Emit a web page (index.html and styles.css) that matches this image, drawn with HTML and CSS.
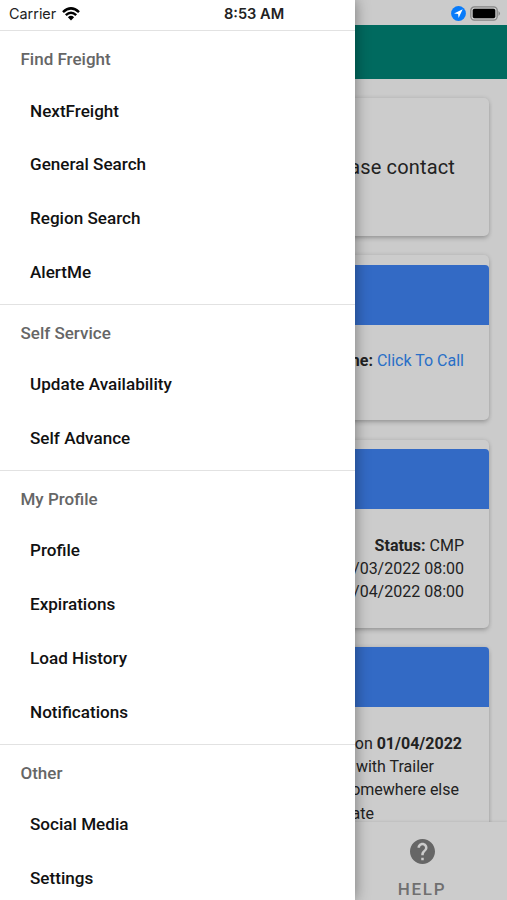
FILE: index.html
```
<!DOCTYPE html>
<html lang="en">
<head>
<meta charset="utf-8">
<title>Freight</title>
<link rel="stylesheet" href="styles.css">
</head>
<body>
<div class="phone">
  <div class="page">
    <div class="status-space"></div>
    <header class="toolbar"></header>
    <main class="content">
      <section class="card notice">Please contact</section>
      <section class="card call">
        <div class="card-head"></div>
        <div class="card-body"><div><b>Phone:</b> <a class="link">Click To Call</a></div></div>
      </section>
      <section class="card load">
        <div class="card-head"></div>
        <div class="card-body"><div><b>Status:</b> CMP</div><div>01/03/2022 08:00</div><div>01/04/2022 08:00</div></div>
      </section>
      <section class="card news">
        <div class="card-head"></div>
        <div class="card-body">
          <div class="line-a">on <b>01/04/2022</b></div>
          <div class="line-b">with Trailer</div>
          <div class="line-c">somewhere else</div>
          <div class="line-d">date</div>
        </div>
      </section>
    </main>
    <footer class="tabs">
      <div class="tab">
        <svg class="help-icon" viewBox="2 2 20 20"><path fill="#666" d="M12 2C6.48 2 2 6.48 2 12s4.48 10 10 10 10-4.48 10-10S17.520 2 12 2zm1 17h-2v-2h2v2zm2.070-7.750l-.9.920C13.450 12.900 13 13.500 13 15h-2v-.5c0-1.100.45-2.100 1.170-2.830l1.240-1.260c.370-.360.590-.860.590-1.410 0-1.100-.9-2-2-2s-2 .9-2 2H8c0-2.210 1.790-4 4-4s4 1.790 4 4c0 .880-.360 1.680-.930 2.250z"/></svg>
        <span>HELP</span>
      </div>
    </footer>
  </div>
  <aside class="drawer">
    <nav>
      <section class="group"><h2>Find Freight</h2><a>NextFreight</a><a>General Search</a><a>Region Search</a><a>AlertMe</a></section>
      <section class="group"><h2>Self Service</h2><a>Update Availability</a><a>Self Advance</a></section>
      <section class="group"><h2>My Profile</h2><a>Profile</a><a>Expirations</a><a>Load History</a><a>Notifications</a></section>
      <section class="group"><h2>Other</h2><a>Social Media</a><a>Settings</a></section>
    </nav>
  </aside>
  <div class="status">
    <span class="carrier">Carrier
      <svg width="18" height="14" viewBox="0 0 18 14" fill="none" stroke="#000" stroke-width="2.500"><path d="M1 5.100Q9-2.400 17 5.100M3.800 8.100Q9 3.300 14.200 8.100"/><path d="M5.900 10.200Q9 7.500 12.100 10.200L9 13.500Z" fill="#000" stroke="none"/></svg>
    </span>
    <span class="clock">8:53 AM</span>
    <span class="right">
      <svg width="15" height="15" viewBox="0 0 15 15"><circle cx="7.500" cy="7.500" r="7.400" fill="#087bfa"/><path d="M11.700 3.300L3 7.500l4.100.4.500 4.100z" fill="#fff"/></svg>
      <svg width="31" height="15" viewBox="0 0 31 15"><rect x=".8" y=".9" width="26.400" height="13.200" rx="3.500" fill="none" stroke="#858585" stroke-width="1.300"/><rect x="2.700" y="2.700" width="22.600" height="9.600" rx="1.800"/><path d="M28.500 5v5q3-2.500 0-5" fill="#858585"/></svg>
    </span>
  </div>
</div>
</body>
</html>
```
FILE: styles.css
```
* { box-sizing: border-box; }
body { margin: 0; font-family: Roboto, "Liberation Sans", sans-serif; }
.phone { position: relative; width: 507px; height: 900px; overflow: hidden; background: #cbcbcb; }
.page { display: flex; flex-direction: column; height: 900px; }
.status-space { flex: 0 0 25px; }
.toolbar { flex: 0 0 54px; background: #006a5f; }
.content { flex: 1; min-height: 0; overflow: hidden; padding: 19px 18px 0; }
.card { border-radius: 5px; background: #cccccc; box-shadow: 0 3px 5px -1px rgba(0,0,0,.22), 0 0 4px rgba(0,0,0,.13); color: #222; }
.notice { height: 138px; padding-right: 34px; line-height: 138px; font-size: 20px; text-align: right; letter-spacing: .15px; }
.call { height: 165px; margin-top: 19px; padding-top: 10px; }
.call .card-body { padding-top: 24px; }
.load { height: 188px; margin-top: 20px; padding-top: 9px; }
.news { height: 210px; margin-top: 19px; }
.card-head { height: 60px; border-radius: 4px 4px 0 0; background: #336ac5; }
.card-body { padding: 25px 25px 0; text-align: right; font-size: 16px; line-height: 23.200px; }
.link { color: #286fc7; }
.line-a { padding-right: 2px; }
.line-b { padding-right: 30px; }
.line-c { padding-right: 5px; }
.line-d { padding-right: 90px; }
.tabs { flex: 0 0 78px; display: flex; justify-content: flex-end; background: #cccccc; box-shadow: 0 -1px 2px rgba(0,0,0,.07); }
.tab { width: 170px; display: flex; flex-direction: column; align-items: center; padding-top: 17px; color: #707070; font-size: 17px; font-weight: 500; letter-spacing: 1.700px; line-height: 20px; }
.tab span { margin-top: 15px; }
.help-icon { width: 25px; height: 25px; flex: none; }
.drawer { position: absolute; inset: 0 auto 0 0; width: 355px; padding-top: 30px; background: #fff; box-shadow: 0 0 14px rgba(0,0,0,.42); }
.group { border-top: 1px solid #e2e2e2; padding: 4px 0 5.100px; }
.group h2 { margin: 0; padding-left: 20.500px; height: 48.500px; line-height: 49px; font-size: 17px; font-weight: 500; color: #666; }
.group a { display: block; padding-left: 30px; height: 53.800px; line-height: 54px; font-size: 17.100px; font-weight: 500; color: #111; }
.status { position: absolute; inset: 0 0 auto; height: 27px; display: grid; grid-template-columns: 1fr auto 1fr; align-items: center; padding: 0 6px 0 9px; font-family: Inter, sans-serif; font-size: 14.400px; color: #222; }
.carrier { display: flex; align-items: center; gap: 6px; }
.clock { font-weight: 600; font-size: 14.600px; position: relative; left: -1px; }
.right { display: flex; justify-content: flex-end; align-items: center; gap: 4px; }
```
